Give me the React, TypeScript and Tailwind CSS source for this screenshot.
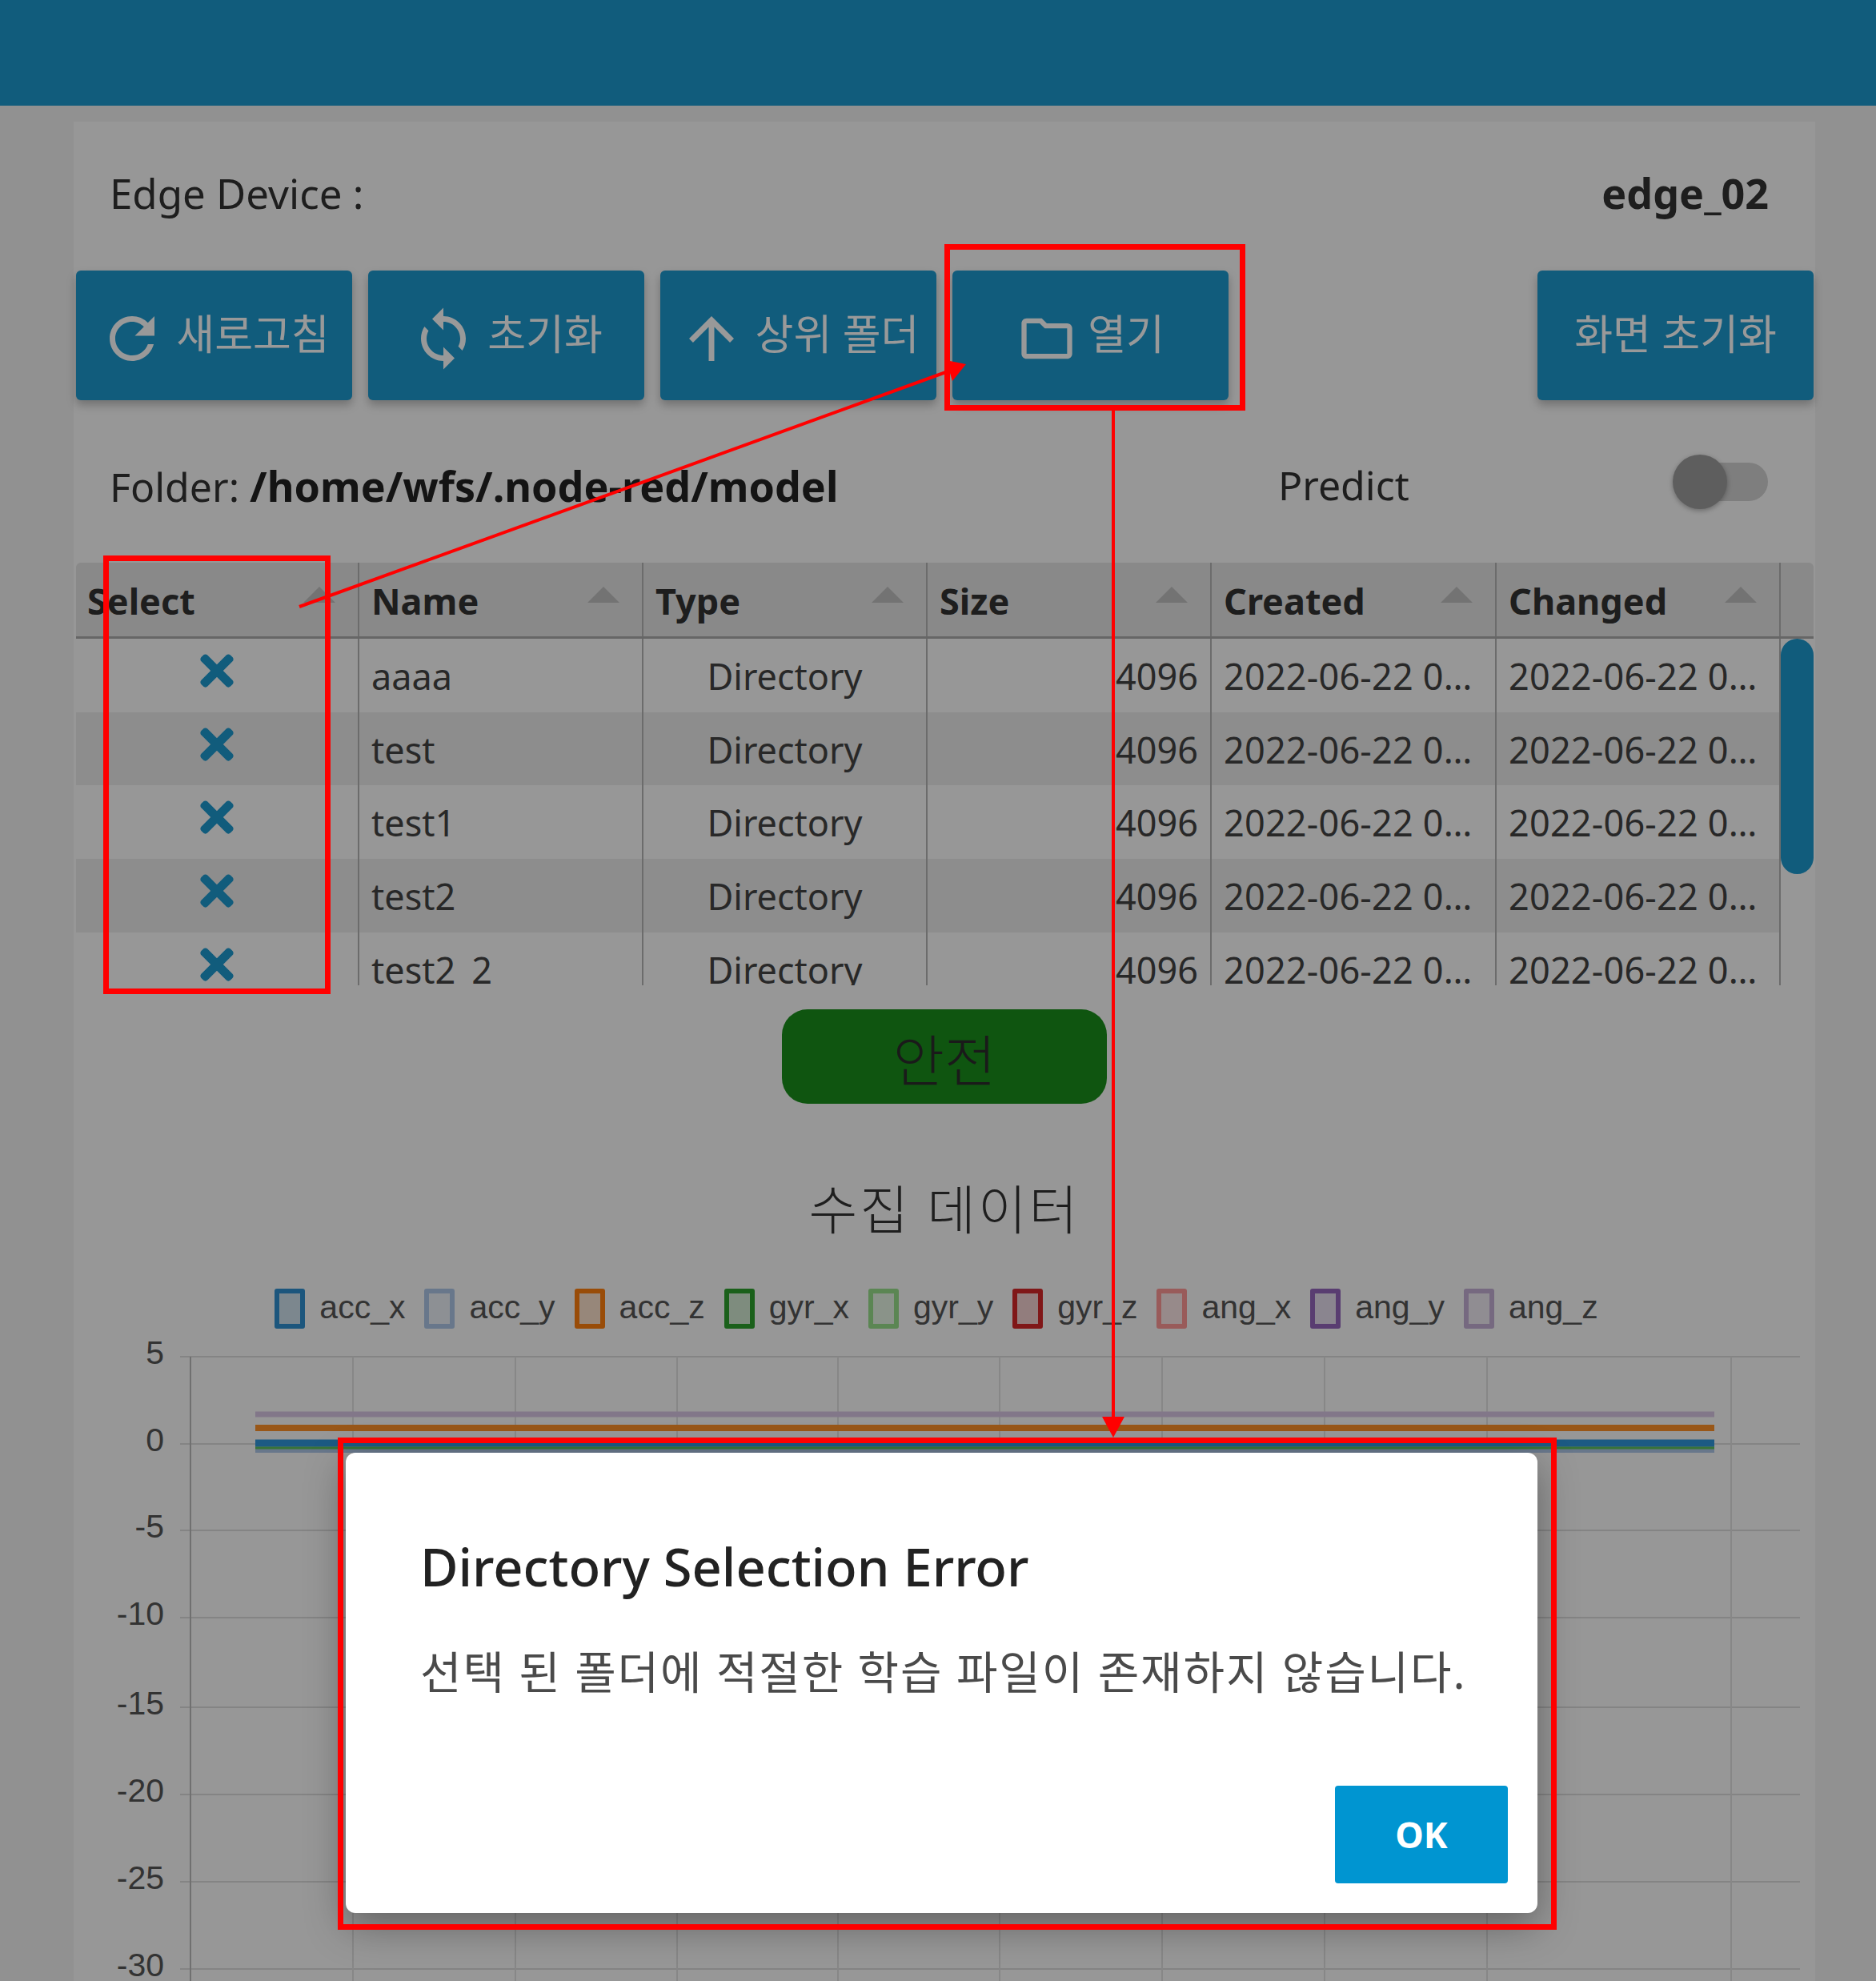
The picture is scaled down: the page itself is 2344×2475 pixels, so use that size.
import { FaTimes } from "react-icons/fa";
import { MdRefresh, MdSync, MdArrowUpward, MdOutlineFolder } from "react-icons/md";

const columns = ["Select", "Name", "Type", "Size", "Created", "Changed"];
const rows = ["aaaa", "test", "test1", "test2", "test2_2"];
const legend = [
  { label: "acc_x", box: "border-[#2f8fd0] bg-[#1f77b4]/20" },
  { label: "acc_y", box: "border-[#aec7e8] bg-[#aec7e8]/20" },
  { label: "acc_z", box: "border-[#ff7f0e] bg-[#ff7f0e]/20" },
  { label: "gyr_x", box: "border-[#2ca02c] bg-[#2ca02c]/20" },
  { label: "gyr_y", box: "border-[#98df8a] bg-[#98df8a]/20" },
  { label: "gyr_z", box: "border-[#d62728] bg-[#d62728]/20" },
  { label: "ang_x", box: "border-[#ff9896] bg-[#ff9896]/20" },
  { label: "ang_y", box: "border-[#9467bd] bg-[#9467bd]/20" },
  { label: "ang_z", box: "border-[#c5b0d5] bg-[#c5b0d5]/20" },
];
const gridX = [146, 349, 552, 754, 955, 1157, 1360, 1563, 1766, 2071];
const ticks = [
  { label: "5", y: 25 },
  { label: "0", y: 134 },
  { label: "-5", y: 242 },
  { label: "-10", y: 351 },
  { label: "-15", y: 463 },
  { label: "-20", y: 572 },
  { label: "-25", y: 681 },
  { label: "-30", y: 790 },
];

function ActionButton({ icon, label }: { icon?: React.ReactNode; label: string }) {
  return (
    <button className="flex h-[162px] w-[345px] items-center justify-center gap-[13px] rounded-[6px] bg-[#1d99cf] text-[52px] text-white shadow-[0_6px_12px_rgba(0,0,0,0.25)]">
      {icon}
      <span className="-translate-y-[2px]">{label}</span>
    </button>
  );
}

function SortArrow() {
  return (
    <svg width="40" height="20" viewBox="0 0 40 20" className="absolute right-[28px] top-[30px]">
      <polygon points="20,0 40,20 0,20" fill="#c0c0c0" />
    </svg>
  );
}

function DeviceChart() {
  return (
    <svg width="2176" height="805" viewBox="0 0 2176 805" className="block">
      {ticks.map((t) => (
        <g key={t.label}>
          <line x1="133" x2="2157" y1={t.y} y2={t.y} stroke="#dddddd" strokeWidth="2" />
          <text x="113" y={t.y + 9} textAnchor="end" fontSize="41" fill="#555555" fontFamily="'Liberation Sans', sans-serif">
            {t.label}
          </text>
        </g>
      ))}
      {gridX.map((x, i) => (
        <line key={x} x1={x} x2={x} y1="25" y2="805" stroke={i === 0 ? "#bbbbbb" : "#e2e2e2"} strokeWidth="2" />
      ))}
      <line x1="227" x2="2050" y1="97" y2="97" stroke="#d9c6e4" strokeWidth="7" />
      <line x1="227" x2="2050" y1="114" y2="114" stroke="#ff9228" strokeWidth="8" />
      <line x1="227" x2="2050" y1="141" y2="141" stroke="#aec7e8" strokeWidth="8" />
      <line x1="227" x2="2050" y1="133" y2="133" stroke="#2f96da" strokeWidth="9" />
      <line x1="227" x2="2050" y1="139" y2="139" stroke="#5cc05c" strokeWidth="3" />
    </svg>
  );
}

export default function App() {
  return (
    <div className="relative h-[2475px] w-[2344px] overflow-hidden bg-[#f2f2f2] font-['Noto_Sans','Noto_Sans_CJK_KR',sans-serif] text-[#333333]">
      {/* Top bar */}
      <div className="h-[132px] bg-[#1d99cf]" />

      {/* Main card */}
      <div className="ml-[92px] mt-[20px] h-[2323px] w-[2176px] bg-[#fcfcfc]">
        <div className="flex h-[178px] items-center justify-between pl-[45px] pr-[58px]">
          <span className="text-[51px]">Edge Device :</span>
          <span className="text-[52px] font-bold">edge_02</span>
        </div>

        <div className="mt-[8px] flex gap-[20px] pl-[3px] pr-[2px]">
          <ActionButton icon={<MdRefresh size={84} className="mt-[8px] text-white" />} label="새로고침" />
          <ActionButton icon={<MdSync size={84} className="mt-[8px] text-white" />} label="초기화" />
          <ActionButton icon={<MdArrowUpward size={84} className="mt-[8px] text-white" />} label="상위 폴더" />
          <ActionButton icon={<MdOutlineFolder size={76} className="mt-[8px] text-white" />} label="열기" />
          <div className="ml-auto">
            <ActionButton label="화면 초기화" />
          </div>
        </div>

        <div className="flex h-[203px] items-center pl-[45px] pr-[59px] pt-[10px] text-[50px]">
          <div className="w-[1460px]">
            Folder: <b className="text-[52px] text-[#222222]">/home/wfs/.node-red/model</b>
          </div>
          <span>Predict</span>
          <div className="relative mb-[10px] ml-auto h-[48px] w-[109px] rounded-full bg-[#d2d2d2]">
            <div className="absolute -left-[10px] -top-[10px] h-[68px] w-[68px] rounded-full bg-[#9d9d9d] shadow-[0_2px_6px_rgba(0,0,0,0.3)]" />
          </div>
        </div>

        {/* File table */}
        <div className="ml-[3px] w-[2171px]">
          <div className="grid h-[95px] grid-cols-[354px_355px_355px_355px_356px_355px_41px] rounded-t-[6px] border-b-[3px] border-[#aaaaaa] bg-[#e4e4e4] text-[45px] font-bold">
            {columns.map((c, i) => (
              <div key={c} className={`relative border-r-2 border-[#b5b5b5] pt-[14px] ${i === 0 ? "pl-[14px]" : "pl-[15px]"}`}>
                {c}
                <SortArrow />
              </div>
            ))}
            <div />
          </div>
          <div className="flex h-[433px] overflow-hidden">
            <div className="w-[2130px]">
              {rows.map((r, i) => (
                <div
                  key={r}
                  className={`grid h-[91.7px] grid-cols-[354px_355px_355px_355px_356px_355px] text-[45px] leading-[91.7px] text-[#444444] ${i % 2 === 1 ? "bg-[#ebebeb]" : ""}`}
                >
                  <div className="flex items-start justify-center border-r-2 border-[#b5b5b5] pt-[10px]">
                    <FaTimes size={60} className="text-[#1d99cf]" />
                  </div>
                  <div className="truncate border-r-2 border-[#b5b5b5] pl-[15px] pt-[1px]">{r}</div>
                  <div className="border-r-2 border-[#b5b5b5] pt-[1px] text-center">Directory</div>
                  <div className="border-r-2 border-[#b5b5b5] pr-[15px] pt-[1px] text-right">4096</div>
                  <div className="truncate border-r-2 border-[#b5b5b5] px-[15px] pt-[1px] tracking-[0.2px]">2022-06-22 01:12:33</div>
                  <div className="truncate border-r-2 border-[#b5b5b5] px-[15px] pt-[1px] tracking-[0.2px]">2022-06-22 01:12:33</div>
                </div>
              ))}
            </div>
            <div className="w-[41px]">
              <div className="h-[294px] rounded-full bg-[#1d99cf]" />
            </div>
          </div>
        </div>

        {/* Status */}
        <div className="mt-[30px] flex justify-center">
          <div className="flex h-[118px] w-[406px] items-center justify-center rounded-[32px] bg-[#198e1b] pt-[10px] text-[70px] font-light text-[#2c2c2c]">
            안전
          </div>
        </div>

        <div className="mt-[81px] h-[100px] text-center text-[66px] font-light leading-[100px] tracking-[3px] text-[#333333]">수집 데이터</div>

        {/* Chart legend */}
        <div className="mt-[50px] flex h-[50px] justify-center gap-[24px] pr-[20px] font-['Liberation_Sans',sans-serif] text-[41px] leading-[46px] text-[#555555]">
          {legend.map((l) => (
            <div key={l.label} className="flex gap-[18px]">
              <div className={`h-[50px] w-[38px] rounded-[3px] border-[6px] ${l.box}`} />
              <span>{l.label}</span>
            </div>
          ))}
        </div>

        <div className="mt-[10px]">
          <DeviceChart />
        </div>
      </div>

      {/* Dialog backdrop */}
      <div className="absolute inset-0 bg-black/40" />

      {/* Error dialog */}
      <div className="absolute left-[432px] top-[1815px] h-[575px] w-[1489px] rounded-[12px] bg-white px-[93px] shadow-[0_16px_50px_rgba(0,0,0,0.35)]">
        <div className="mt-[100px] whitespace-nowrap text-[65px] font-medium leading-[84px] text-[#222222]">Directory Selection Error</div>
        <div className="mt-[52px] whitespace-nowrap text-[56px] leading-[74px] tracking-[1.9px] text-[#4a4a4a]">선택 된 폴더에 적절한 학습 파일이 존재하지 않습니다.</div>
        <button className="absolute bottom-[37px] right-[37px] h-[122px] w-[216px] rounded-[4px] bg-[#0095d1] text-[45px] font-bold text-white">OK</button>
      </div>

      {/* Red annotations */}
      <svg width="2344" height="2475" viewBox="0 0 2344 2475" className="pointer-events-none absolute inset-0">
        <rect x="1183.5" y="308.5" width="369" height="201" fill="none" stroke="#ff0000" strokeWidth="7" />
        <rect x="132.5" y="697.5" width="277" height="541" fill="none" stroke="#ff0000" strokeWidth="7" />
        <rect x="425.5" y="1799.5" width="1516" height="608" fill="none" stroke="#ff0000" strokeWidth="7" />
        <line x1="374" y1="758" x2="1190" y2="462" stroke="#ff0000" strokeWidth="4" />
        <polygon points="1207,455 1182,450 1190,476" fill="#ff0000" />
        <line x1="1391" y1="513" x2="1391" y2="1775" stroke="#ff0000" strokeWidth="4" />
        <polygon points="1391,1796 1377,1770 1405,1770" fill="#ff0000" />
      </svg>
    </div>
  );
}
